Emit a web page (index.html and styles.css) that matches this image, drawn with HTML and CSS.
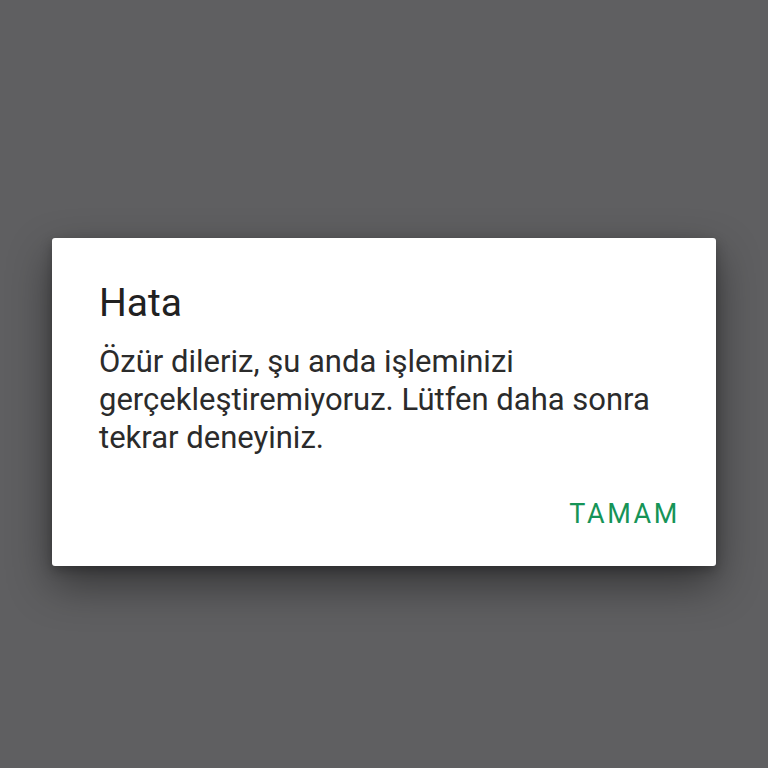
FILE: index.html
```html
<!DOCTYPE html>
<html lang="tr">

<head>
  <meta charset="UTF-8">
  <meta name="viewport" content="width=device-width, initial-scale=1.0">
  <title>Hata</title>
  <link rel="stylesheet" href="styles.css">
</head>

<body>

  <div class="scrim">
    <!-- Error dialog -->
    <div class="dialog">
      <h2 class="dialog-title">Hata</h2>
      <p class="dialog-message">Özür dileriz, şu anda işleminizi gerçekleştiremiyoruz. Lütfen daha sonra tekrar deneyiniz.</p>
      <div class="dialog-actions">
        <button type="button">TAMAM</button>
      </div>
    </div>
  </div>

</body>

</html>
```

FILE: styles.css
```css
body {
  font-family: Roboto, "Noto Sans", sans-serif;
  background-color: #5f5f61;
  margin: 0;
}

.scrim {
  height: 768px;
  display: flex;
  align-items: center;
  padding-left: 52px;
  box-sizing: border-box;
}

.dialog {
  width: 664px;
  height: 328px;
  margin-top: 36px;
  box-sizing: border-box;
  background-color: #fff;
  border-radius: 3px;
  box-shadow: 0 18px 44px rgba(0, 0, 0, 0.45), 0 4px 12px rgba(0, 0, 0, 0.25);
  padding: 39px 38px 0 47px;
}

.dialog-title {
  margin: 0;
  font-size: 39px;
  font-weight: normal;
  line-height: 52px;
  color: #212121;
}

.dialog-message {
  margin: 14px 0 0;
  font-size: 31px;
  line-height: 38px;
  color: #2b2b2b;
}

.dialog-actions {
  display: flex;
  justify-content: flex-end;
  margin-top: 41px;
}

button {
  font-family: inherit;
  font-size: 27px;
  letter-spacing: 2.6px;
  color: #169457;
  background: none;
  border: none;
  padding: 0;
  margin-right: -2px;
  cursor: pointer;
}
```
